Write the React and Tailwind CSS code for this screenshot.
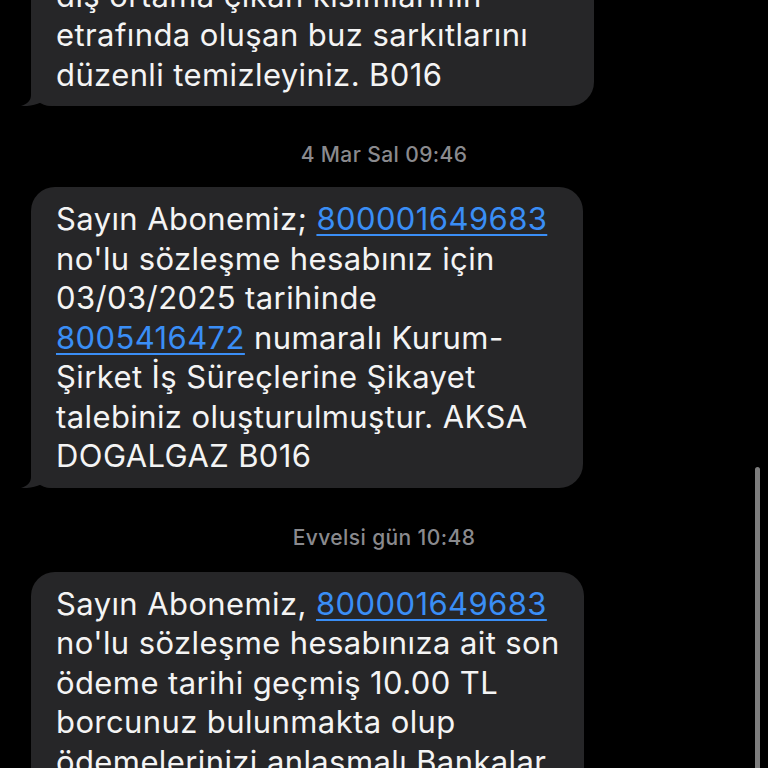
import React from "react";

const Link = ({ children }) => (
  <span className="text-[#3a8ef6] underline decoration-[2px] underline-offset-[4px]">{children}</span>
);

const Tail = () => (
  <svg
    className="absolute left-[-10px] bottom-0"
    width="36"
    height="24"
    viewBox="0 0 36 24"
  >
    <path
      d="M10,0 L10,13 C10,19 6,22 0,24 C8,24.5 14,23 20,20.5 C24,23 30,24 36,24 L36,0 Z"
      fill="#262628"
    />
  </svg>
);

const Bubble = ({ w, children }) => (
  <div className={`relative ml-[31px] ${w}`}>
    <div className="relative z-10 rounded-[24px] rounded-bl-[20px] bg-[#262628] pl-[25px] pr-[20px] pt-[12px] pb-[12px] text-[31px] tracking-[0.4px] leading-[39.5px] text-[#f4f4f4] whitespace-nowrap">
      {children}
    </div>
    <div className="absolute inset-0 z-20 pointer-events-none">
      <Tail />
    </div>
  </div>
);

const Stamp = ({ children, cls }) => (
  <div className={`text-center text-[21px] tracking-[0.4px] leading-[24px] font-medium text-[#8a8a8e] ${cls}`}>
    {children}
  </div>
);

export default function App() {
  return (
    <div
      className="relative h-[768px] w-[768px] overflow-hidden bg-black"
      style={{ fontFamily: "Inter, 'Noto Sans', sans-serif" }}
    >
      <div className="flex flex-col -mt-[76px]">
        <Bubble w="w-[563px]">
          Soğuk havalarda kombi bacası ve
          <br />
          dış ortama çıkan kısımlarının
          <br />
          etrafında oluşan buz sarkıtlarını
          <br />
          düzenli temizleyiniz. B016
        </Bubble>

        <Stamp cls="mt-[37px] mb-[20px]">4 Mar Sal 09:46</Stamp>

        <Bubble w="w-[552px]">
          Sayın Abonemiz; <Link>800001649683</Link>
          <br />
          no'lu sözleşme hesabınız için
          <br />
          03/03/2025 tarihinde
          <br />
          <Link>8005416472</Link> numaralı Kurum-
          <br />
          Şirket İş Süreçlerine Şikayet
          <br />
          talebiniz oluşturulmuştur. AKSA
          <br />
          DOGALGAZ B016
        </Bubble>

        <Stamp cls="mt-[38px] mb-[22px]">Evvelsi gün 10:48</Stamp>

        <Bubble w="w-[553px]">
          Sayın Abonemiz, <Link>800001649683</Link>
          <br />
          no'lu sözleşme hesabınıza ait son
          <br />
          ödeme tarihi geçmiş 10.00 TL
          <br />
          borcunuz bulunmakta olup
          <br />
          ödemelerinizi anlaşmalı Bankalar
          <br />
          aracılığıyla yapabilirsiniz.
        </Bubble>
      </div>

      <div className="absolute right-[8px] top-[467px] h-[320px] w-[5px] rounded-full bg-[#7d7d7d]" />
    </div>
  );
}
